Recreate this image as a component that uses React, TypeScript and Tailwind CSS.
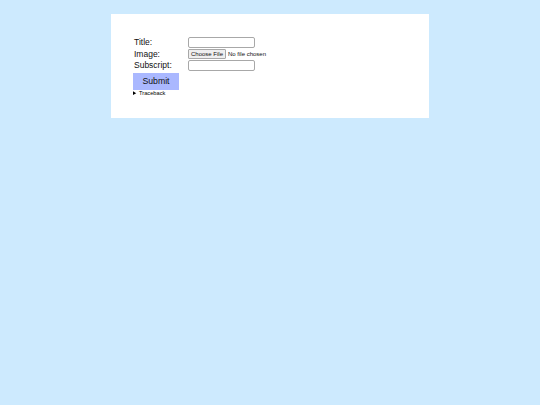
export default function App() {
  return (
    <div className="min-h-[405px] w-full bg-[#cdeafe] pt-[14px]" style={{ fontFamily: '"Liberation Sans", Arial, sans-serif' }}>
      <div className="mx-auto h-[104px] w-[318px] bg-white pl-[22px] pt-[23px]">
        <div className="grid auto-rows-[11px] grid-cols-[55px_auto] items-center gap-y-[0.5px] text-[8.5px] leading-none text-[#111]">
          <label className="pl-[1px]">Title:</label>
          <input type="text" className="h-[11px] w-[67px] rounded-[2px] border border-[#a8a8a8] bg-white" />
          <label className="pl-[1px]">Image:</label>
          <div className="flex items-center text-[6px] leading-none">
            <span className="flex h-[10px] items-center rounded-[1px] border border-[#a8a8a8] bg-[#efefef] px-[2px]">Choose File</span>
            <span className="ml-[2px]">No file chosen</span>
          </div>
          <label className="pl-[1px]">Subscript:</label>
          <input type="text" className="h-[11px] w-[67px] rounded-[2px] border border-[#a8a8a8] bg-white" />
        </div>
        <button className="mt-[2px] flex h-[17px] w-[46px] items-center justify-center bg-[#aab8ff] text-[8.7px] leading-none text-[#111]">
          Submit
        </button>
        <details className="text-[5.7px] leading-[7px] text-black">
          <summary className="cursor-pointer">Traceback</summary>
        </details>
      </div>
    </div>
  );
}
